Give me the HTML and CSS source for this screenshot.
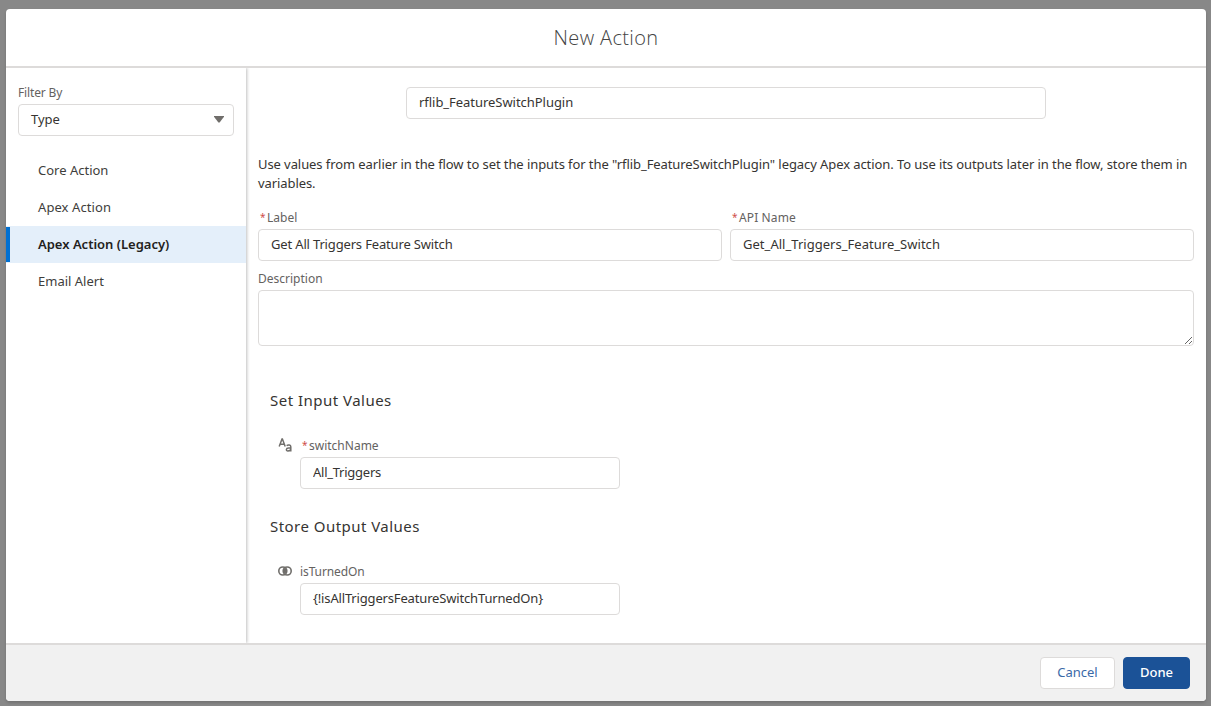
FILE: index.html
```html
<!DOCTYPE html>
<html lang="en">
<head>
<meta charset="utf-8">
<title>New Action</title>
<link rel="stylesheet" href="styles.css">
</head>
<body>
<section class="modal" role="dialog" aria-labelledby="modal-title">
  <header class="modal-header"><h1 class="modal-title" id="modal-title">New Action</h1></header>
  <div class="modal-body">
    <aside class="sidebar">
      <div class="filter">
        <label class="label filter-label" for="filter">Filter By</label>
        <div class="select" id="filter"><span class="select-value">Type</span><svg class="caret" width="10" height="7" viewBox="0 0 10 7"><path d="M0 0h10v.8L5.6 6.6h-1.2L0 .8z" fill="#706e6b"/></svg></div>
      </div>
      <nav class="nav">
        <a class="nav-item core">Core Action</a>
        <a class="nav-item apex">Apex Action</a>
        <a class="nav-item active">Apex Action (Legacy)</a>
        <a class="nav-item email">Email Alert</a>
      </nav>
    </aside>
    <main class="content">
      <input class="input plugin" type="text" value="rflib_FeatureSwitchPlugin">
      <p class="intro">Use values from earlier in the flow to set the inputs for the "rflib_FeatureSwitchPlugin" legacy Apex action. To use its outputs later in the flow, store them in variables.</p>
      <div class="row">
        <div class="field">
          <label class="label"><span class="required">*</span>Label</label>
          <input class="input name" type="text" value="Get All Triggers Feature Switch">
        </div>
        <div class="field">
          <label class="label api"><span class="required">*</span>API Name</label>
          <input class="input api-name" type="text" value="Get_All_Triggers_Feature_Switch">
        </div>
      </div>
      <div class="field description">
        <label class="label">Description</label>
        <textarea class="input textarea"></textarea>
      </div>
      <h2 class="heading set">Set Input Values</h2>
      <div class="param">
        <svg class="param-icon" width="14" height="14" viewBox="0 0 14 14" fill="none" stroke="#706e6b" stroke-width="1.5"><path d="M1.2 8.6 4 1h.4l2.8 7.6M2.2 6.2h4"/><path d="M8.6 7.6c1.5-1 4.2-.8 4.2 1.2v4.7M12.8 10.1h-2.2c-2.9 0-2.8 2.8-.7 2.8 1.7 0 2.9-.8 2.9-1.8"/></svg>
        <div class="field">
          <label class="label"><span class="required">*</span>switchName</label>
          <input class="input triggers" type="text" value="All_Triggers">
        </div>
      </div>
      <h2 class="heading store">Store Output Values</h2>
      <div class="param">
        <svg class="param-icon" width="14" height="14" viewBox="0 0 14 14"><g fill="none" stroke="#706e6b" stroke-width="1.6"><circle cx="4.8" cy="7" r="4"/><circle cx="9.2" cy="7" r="4"/></g><path d="M7 3.6c1.7 1.8 1.7 5 0 6.8-1.7-1.8-1.7-5 0-6.8z" fill="#706e6b"/></svg>
        <div class="field">
          <label class="label turned">isTurnedOn</label>
          <input class="input variable" type="text" value="{!isAllTriggersFeatureSwitchTurnedOn}">
        </div>
      </div>
    </main>
  </div>
  <footer class="modal-footer">
    <button class="button cancel" type="button">Cancel</button>
    <button class="button done" type="button">Done</button>
  </footer>
</section>
</body>
</html>
```

FILE: styles.css
```css
* { box-sizing: border-box; }
body {
  margin: 0;
  height: 706px;
  padding: 9px 5px 5px 6px;
  overflow: hidden;
  background: #888;
  color: #363432;
  font: 13px/19px "Noto Sans", sans-serif;
}
.modal {
  display: flex;
  flex-direction: column;
  height: 692px;
  border-radius: 4px;
  background: #fff;
  box-shadow: 0 2px 3px rgba(0, 0, 0, .16);
}
.modal-header {
  height: 59px;
  border-bottom: 2px solid #dddbda;
  text-align: center;
}
.modal-title {
  margin: 0;
  padding-top: 16px;
  color: #444;
  font: 300 20px/25px "Open Sans", sans-serif;
  letter-spacing: .35px;
}
.modal-body { display: flex; height: 575px; }
.sidebar {
  width: 240px;
  box-shadow: 1px 0 3px rgba(0, 0, 0, .25);
  clip-path: inset(0 -6px 0 0);
}
.filter { padding: 16px 12px 0; }
.label {
  display: block;
  height: 20px;
  color: #64625f;
  font-size: 12px;
  line-height: 18px;
  white-space: nowrap;
}
.filter-label { letter-spacing: -.15px; }
.api { letter-spacing: .12px; }
.turned { letter-spacing: -.1px; }
.select, .input {
  width: 100%;
  height: 32px;
  border: 1px solid #dddbda;
  border-radius: 4px;
  background: #fff;
  color: #363432;
}
.select {
  display: flex;
  align-items: center;
  justify-content: space-between;
  padding: 0 9px 2px 12px;
}
.input {
  display: block;
  padding: 0 12px 2px;
  font: 13px/19px "Noto Sans", sans-serif;
  outline: 0;
}
.nav { padding-top: 16px; }
.nav-item {
  display: block;
  height: 37px;
  padding-left: 32px;
  line-height: 37px;
  color: #3e3e3c;
}
.apex { letter-spacing: .08px; }
.nav-item.active {
  background: linear-gradient(#0070d2, #0070d2) 0 1px / 4px 35px no-repeat #e4effa;
  color: #222120;
  font-weight: 600;
}
.content { flex: 1; padding: 19px 12px 0; }
.plugin { width: 640px; margin: 0 auto; letter-spacing: -.04px; }
.intro { margin: 36px 0 16px; letter-spacing: -.08px; }
.row { display: flex; gap: 8px; }
.row .field { flex: 1; }
.required {
  display: inline-block;
  width: 5px;
  height: 18px;
  margin: 0 2px;
  vertical-align: top;
  line-height: 17px;
  color: #cf4f49;
  font-size: 10px;
  letter-spacing: 0;
}
.description { padding-top: 9px; }
.textarea { height: 56px; resize: vertical; }
.name { letter-spacing: -.16px; }
.api-name { letter-spacing: .03px; }
.triggers { letter-spacing: -.25px; }
.variable { letter-spacing: -.16px; }
.heading {
  margin: 42px 0 0 12px;
  font-size: 15px;
  line-height: 25px;
  height: 24px;
  font-weight: 400;
  letter-spacing: .48px;
}
.param {
  display: flex;
  gap: 8px;
  padding: 25px 0 0 20px;
}
.param-icon { margin-top: 1px; }
.param .field { width: 320px; }
.heading.store { margin-top: 25px; letter-spacing: .46px; }
.modal-footer {
  display: flex;
  flex: 1;
  justify-content: flex-end;
  gap: 8px;
  padding: 12px 16px;
  border-top: 2px solid #dddbda;
  border-radius: 0 0 4px 4px;
  background: #f1f1f1;
}
.button {
  height: 32px;
  padding: 0 0 2px;
  border: 1px solid #dddbda;
  border-radius: 4px;
  background: #fff;
  color: #3a69a8;
  font: 13px/28px "Noto Sans", sans-serif;
}
.cancel { width: 75px; }
.done {
  width: 67px;
  border-color: #1b5297;
  background: #1b5297;
  color: #fff;
  font-weight: 500;
}
```
